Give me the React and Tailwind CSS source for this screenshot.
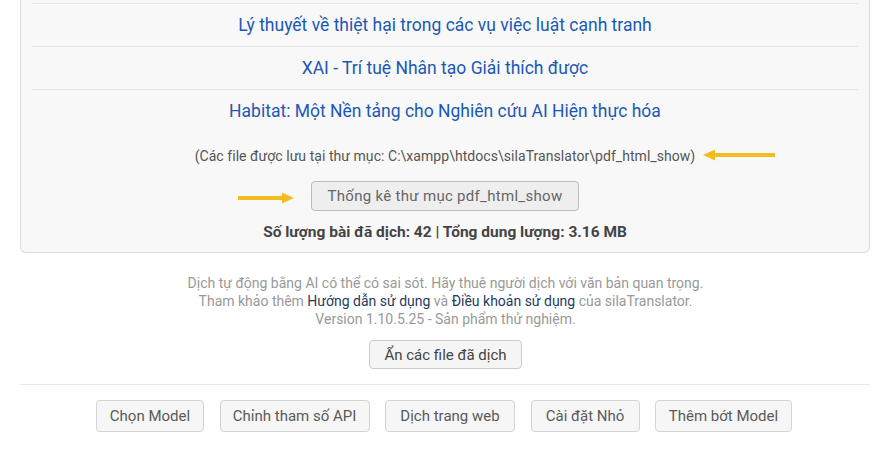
import React from 'react';

const Arrow = ({ dir = 'left', width = 72, className = '' }) => (
  <svg className={className} width={width} height="12" viewBox={`0 0 ${width} 12`}>
    {dir === 'left' ? (
      <>
        <line x1="10" y1="6" x2={width} y2="6" stroke="#f5bc21" strokeWidth="4" />
        <polygon points="0,6 12,0.5 12,11.5" fill="#f5bc21" />
      </>
    ) : (
      <>
        <line x1="0" y1="6" x2={width - 10} y2="6" stroke="#f5bc21" strokeWidth="4" />
        <polygon points={`${width},6 ${width - 12},0.5 ${width - 12},11.5`} fill="#f5bc21" />
      </>
    )}
  </svg>
);

const App = () => {
  const articles = [
    'Lý thuyết về thiệt hại trong các vụ việc luật cạnh tranh',
    'XAI - Trí tuệ Nhân tạo Giải thích được',
    'Habitat: Một Nền tảng cho Nghiên cứu AI Hiện thực hóa',
  ];

  const tools = [
    { label: 'Chọn Model', cls: 'w-[108px]' },
    { label: 'Chỉnh tham số API', cls: 'w-[150px]' },
    { label: 'Dịch trang web', cls: 'w-[130px]' },
    { label: 'Cài đặt Nhỏ', cls: 'w-[109px]' },
    { label: 'Thêm bớt Model', cls: 'w-[137px]' },
  ];

  return (
    <div className="w-[891px] h-[450px] overflow-hidden bg-white px-[20px] font-['Roboto',sans-serif]">
      {/* Saved files panel */}
      <div className="w-[850px] bg-[#f8f8f8] border-x border-b border-[#dddddd] rounded-b-[6px] pt-[3px] pb-[8px]">
        <ul className="px-[11px]">
          {articles.map((title) => (
            <li key={title} className="h-[43px] border-t border-[#e6e6e6] flex items-center justify-center">
              <a href="#" className="text-[17.5px] text-[#1b58b3] pt-[1px]">{title}</a>
            </li>
          ))}
        </ul>

        <div className="mt-[14px] flex justify-center">
          <span className="relative text-[14px] tracking-[0.05px] text-[#555555]">
            (Các file được lưu tại thư mục: C:\xampp\htdocs\silaTranslator\pdf_html_show)
            <Arrow dir="left" className="absolute left-[calc(100%+8px)] top-[3px]" />
          </span>
        </div>

        <div className="mt-[14px] flex justify-center">
          <span className="relative">
            <Arrow dir="right" width={56} className="absolute right-[calc(100%+17px)] top-[11px]" />
            <button className="h-[30px] w-[268px] bg-[#eeeeee] border border-[#bbbbbb] rounded-[4px] text-[15px] text-[#666666] tracking-[0.3px]">
              Thống kê thư mục pdf_html_show
            </button>
          </span>
        </div>

        <p className="mt-[10px] text-center text-[15.5px] font-bold text-[#444444]">
          Số lượng bài đã dịch: 42 | Tổng dung lượng: 3.16 MB
        </p>
      </div>

      {/* Footer notes */}
      <div className="mt-[21px] text-center text-[14px] leading-[18px] text-[#999999]">
        <p>Dịch tự động bằng AI có thể có sai sót. Hãy thuê người dịch với văn bản quan trọng.</p>
        <p>
          Tham khảo thêm <a href="#" className="text-[#1f3b63]">Hướng dẫn sử dụng</a> và{' '}
          <a href="#" className="text-[#1f3b63]">Điều khoản sử dụng</a> của silaTranslator.
        </p>
        <p>Version 1.10.5.25 - Sản phẩm thử nghiệm.</p>
      </div>

      <div className="mt-[12px] flex justify-center">
        <button className="h-[29px] px-[14px] bg-[#f5f5f5] border border-[#cccccc] rounded-[4px] text-[15px] text-[#444444]">
          Ẩn các file đã dịch
        </button>
      </div>

      <hr className="mt-[15px] w-[850px] border-t border-[#e8e8e8]" />

      <div className="mt-[15px] flex justify-center gap-[15.5px] pr-[3px]">
        {tools.map((t) => (
          <button
            key={t.label}
            className={`h-[32px] bg-[#f6f6f6] border border-[#d4d4d4] rounded-[4px] text-[15px] text-[#5a5a5a] ${t.cls}`}
          >
            {t.label}
          </button>
        ))}
      </div>
    </div>
  );
};

export default App;
